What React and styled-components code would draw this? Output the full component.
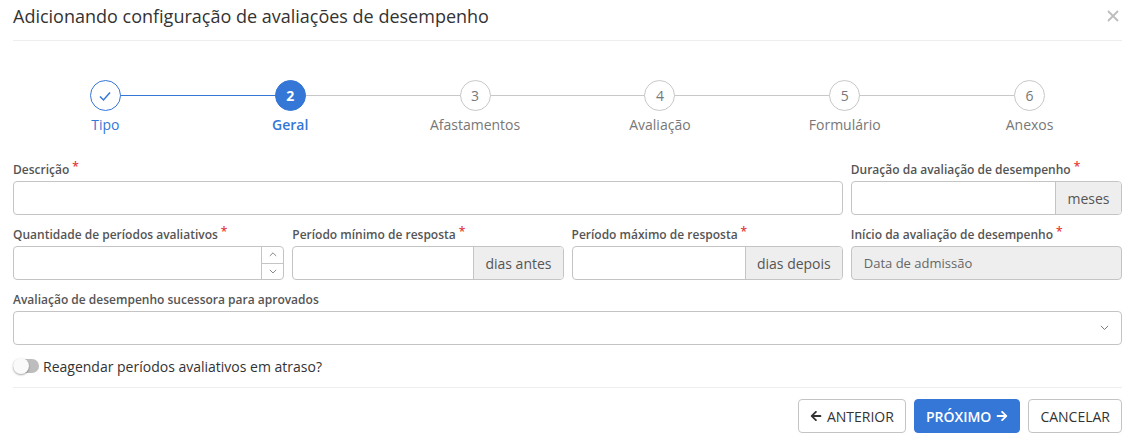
import React from "react"
import styled, { createGlobalStyle, css } from "styled-components"
import { FaArrowLeft, FaArrowRight } from "react-icons/fa"

const BLUE = "#3577d7"

const GlobalStyle = createGlobalStyle`
  html, body {
    margin: 0;
    padding: 0;
    background: #fff;
  }
  body {
    font-family: "Open Sans", "Liberation Sans", sans-serif;
    color: #333;
  }
  * {
    box-sizing: border-box;
  }
`

const Modal = styled.div`
  width: 1130px;
  padding: 0 8px 0 13px;
`

const Header = styled.div`
  display: flex;
  align-items: center;
  justify-content: space-between;
  height: 41px;
  padding-bottom: 8px;
  border-bottom: 1px solid #eee;
  h1 {
    margin: 0;
    font-size: 18px;
    font-weight: 400;
    color: #333;
  }
`

const Close = styled.button`
  border: 0;
  background: none;
  padding: 0;
  margin-right: 2px;
  width: 14px;
  height: 14px;
  display: flex;
  cursor: pointer;
`

const Stepper = styled.ol`
  list-style: none;
  margin: 39px 0 0;
  padding: 0;
  display: grid;
  grid-template-columns: repeat(6, 1fr);
`

const Step = styled.li`
  position: relative;
  display: flex;
  flex-direction: column;
  align-items: center;
  &:not(:first-child)::before {
    content: "";
    position: absolute;
    top: 15px;
    left: -50%;
    right: 50%;
    height: 1px;
    background: ${(p) => (p.$reached ? BLUE : "#c8c8c8")};
  }
`

const Circle = styled.span`
  position: relative;
  z-index: 1;
  width: 31px;
  height: 31px;
  border-radius: 50%;
  display: flex;
  align-items: center;
  justify-content: center;
  font-size: 14px;
  background: #fff;
  border: 1px solid #c8c8c8;
  color: #777;
  ${(p) =>
    p.$state === "done" &&
    css`
      border-color: ${BLUE};
      color: ${BLUE};
    `}
  ${(p) =>
    p.$state === "active" &&
    css`
      border-color: ${BLUE};
      background: ${BLUE};
      color: #fff;
      font-weight: 700;
    `}
`

const StepLabel = styled.span`
  margin-top: 4px;
  font-size: 14px;
  line-height: 19px;
  color: ${(p) => (p.$on ? BLUE : "#777")};
  font-weight: ${(p) => (p.$bold ? 600 : 400)};
`

const Form = styled.div`
  margin-top: 28px;
  display: grid;
  grid-template-columns: repeat(4, 1fr);
  column-gap: 8px;
  row-gap: 12px;
`

const Field = styled.div`
  grid-column: span ${(p) => p.$span || 1};
  display: flex;
  flex-direction: column;
  min-width: 0;
`

const Label = styled.label`
  display: block;
  height: 15px;
  font-size: 12px;
  line-height: 15px;
  font-weight: 600;
  color: #555;
  margin-bottom: 4px;
  white-space: nowrap;
  sup {
    position: relative;
    top: -3px;
    vertical-align: baseline;
    color: #e53935;
    font-size: 12px;
    margin-left: 3px;
    line-height: 0;
  }
`

const Control = styled.div`
  display: flex;
  height: 34px;
  border: 1px solid #c4c4c4;
  border-radius: 4px;
  overflow: hidden;
  background: ${(p) => (p.$disabled ? "#eee" : "#fff")};
`

const Input = styled.input`
  flex: 1;
  min-width: 0;
  border: 0;
  outline: none;
  background: transparent;
  padding: 0 12px;
  font-family: inherit;
  font-size: 13px;
  color: #555;
  &::placeholder {
    color: #666;
  }
`

const Addon = styled.span`
  display: flex;
  align-items: center;
  padding: 0 11px;
  background: #eee;
  border-left: 1px solid #c4c4c4;
  font-size: 14px;
  color: #555;
  min-width: ${(p) => p.$w || "auto"};
  justify-content: center;
`

const Spin = styled.div`
  width: 22px;
  display: flex;
  flex-direction: column;
  border-left: 1px solid #c4c4c4;
  span {
    flex: 1;
    display: flex;
    align-items: center;
    justify-content: center;
  }
  span + span {
    border-top: 1px solid #c4c4c4;
  }
`

const Chevron = ({ up, size = 8 }) => (
  <svg width={size} height={size * 0.6} viewBox="0 0 10 6">
    <polyline
      points={up ? "1,5 5,1 9,5" : "1,1 5,5 9,1"}
      fill="none"
      stroke="#777"
      strokeWidth="1.1"
    />
  </svg>
)

const SelectArrow = styled.span`
  display: flex;
  align-items: center;
  padding: 0 12px 0 0;
`

const ToggleRow = styled.label`
  display: flex;
  align-items: center;
  gap: 4px;
  margin-top: 11px;
  height: 20px;
  font-size: 14px;
  color: #333;
`

const Track = styled.span`
  position: relative;
  width: 26px;
  height: 14px;
  border-radius: 7px;
  background: #bdbdbd;
  &::after {
    content: "";
    position: absolute;
    left: 0;
    top: -1px;
    width: 16px;
    height: 16px;
    border-radius: 50%;
    background: #fafafa;
    box-shadow: 0 1px 2px rgba(0, 0, 0, 0.35);
  }
`

const Footer = styled.div`
  margin-top: 11px;
  border-top: 1px solid #eee;
  padding-top: 11px;
  display: flex;
  justify-content: flex-end;
  gap: 8px;
`

const Button = styled.button`
  height: 34px;
  padding: 0 11px;
  display: flex;
  align-items: center;
  gap: 5px;
  font-family: inherit;
  font-size: 14px;
  text-transform: uppercase;
  border-radius: 4px;
  border: 1px solid ${(p) => (p.$primary ? BLUE : "#c4c4c4")};
  background: ${(p) => (p.$primary ? BLUE : "#fff")};
  color: ${(p) => (p.$primary ? "#fff" : "#333")};
  font-weight: ${(p) => (p.$primary ? 600 : 400)};
  svg {
    font-size: 12px;
  }
`

const steps = ["Tipo", "Geral", "Afastamentos", "Avaliação", "Formulário", "Anexos"]
const active = 1

function Req({ children }) {
  return (
    <Label>
      {children}
      <sup>*</sup>
    </Label>
  )
}

export default function App() {
  return (
    <Modal>
      <GlobalStyle />
      <Header>
        <h1>Adicionando configuração de avaliações de desempenho</h1>
        <Close aria-label="Fechar">
          <svg width="14" height="14" viewBox="0 0 14 14">
            <path d="M2 2L12 12M12 2L2 12" stroke="#bdbdbd" strokeWidth="1.8" />
          </svg>
        </Close>
      </Header>

      <Stepper>
        {steps.map((s, i) => {
          const state = i < active ? "done" : i === active ? "active" : "todo"
          return (
            <Step key={s} $reached={i <= active}>
              <Circle $state={state}>
                {state === "done" ? (
                  <svg width="16" height="16" viewBox="0 0 16 16">
                    <polyline points="3,8.5 6.5,12 13,4.5" fill="none" stroke={BLUE} strokeWidth="1.5" />
                  </svg>
                ) : (
                  i + 1
                )}
              </Circle>
              <StepLabel $on={i <= active} $bold={i === active}>
                {s}
              </StepLabel>
            </Step>
          )
        })}
      </Stepper>

      <Form>
        <Field $span={3}>
          <Req>Descrição</Req>
          <Control>
            <Input />
          </Control>
        </Field>
        <Field>
          <Req>Duração da avaliação de desempenho</Req>
          <Control>
            <Input />
            <Addon $w="66px">meses</Addon>
          </Control>
        </Field>

        <Field>
          <Req>Quantidade de períodos avaliativos</Req>
          <Control>
            <Input />
            <Spin>
              <span>
                <Chevron up />
              </span>
              <span>
                <Chevron />
              </span>
            </Spin>
          </Control>
        </Field>
        <Field>
          <Req>Período mínimo de resposta</Req>
          <Control>
            <Input />
            <Addon>dias antes</Addon>
          </Control>
        </Field>
        <Field>
          <Req>Período máximo de resposta</Req>
          <Control>
            <Input />
            <Addon>dias depois</Addon>
          </Control>
        </Field>
        <Field>
          <Req>Início da avaliação de desempenho</Req>
          <Control $disabled>
            <Input placeholder="Data de admissão" disabled />
          </Control>
        </Field>

        <Field $span={4}>
          <Label>Avaliação de desempenho sucessora para aprovados</Label>
          <Control>
            <Input />
            <SelectArrow>
              <Chevron size={9} />
            </SelectArrow>
          </Control>
        </Field>
      </Form>

      <ToggleRow>
        <Track />
        Reagendar períodos avaliativos em atraso?
      </ToggleRow>

      <Footer>
        <Button>
          <FaArrowLeft /> Anterior
        </Button>
        <Button $primary>
          Próximo <FaArrowRight />
        </Button>
        <Button>Cancelar</Button>
      </Footer>
    </Modal>
  )
}
